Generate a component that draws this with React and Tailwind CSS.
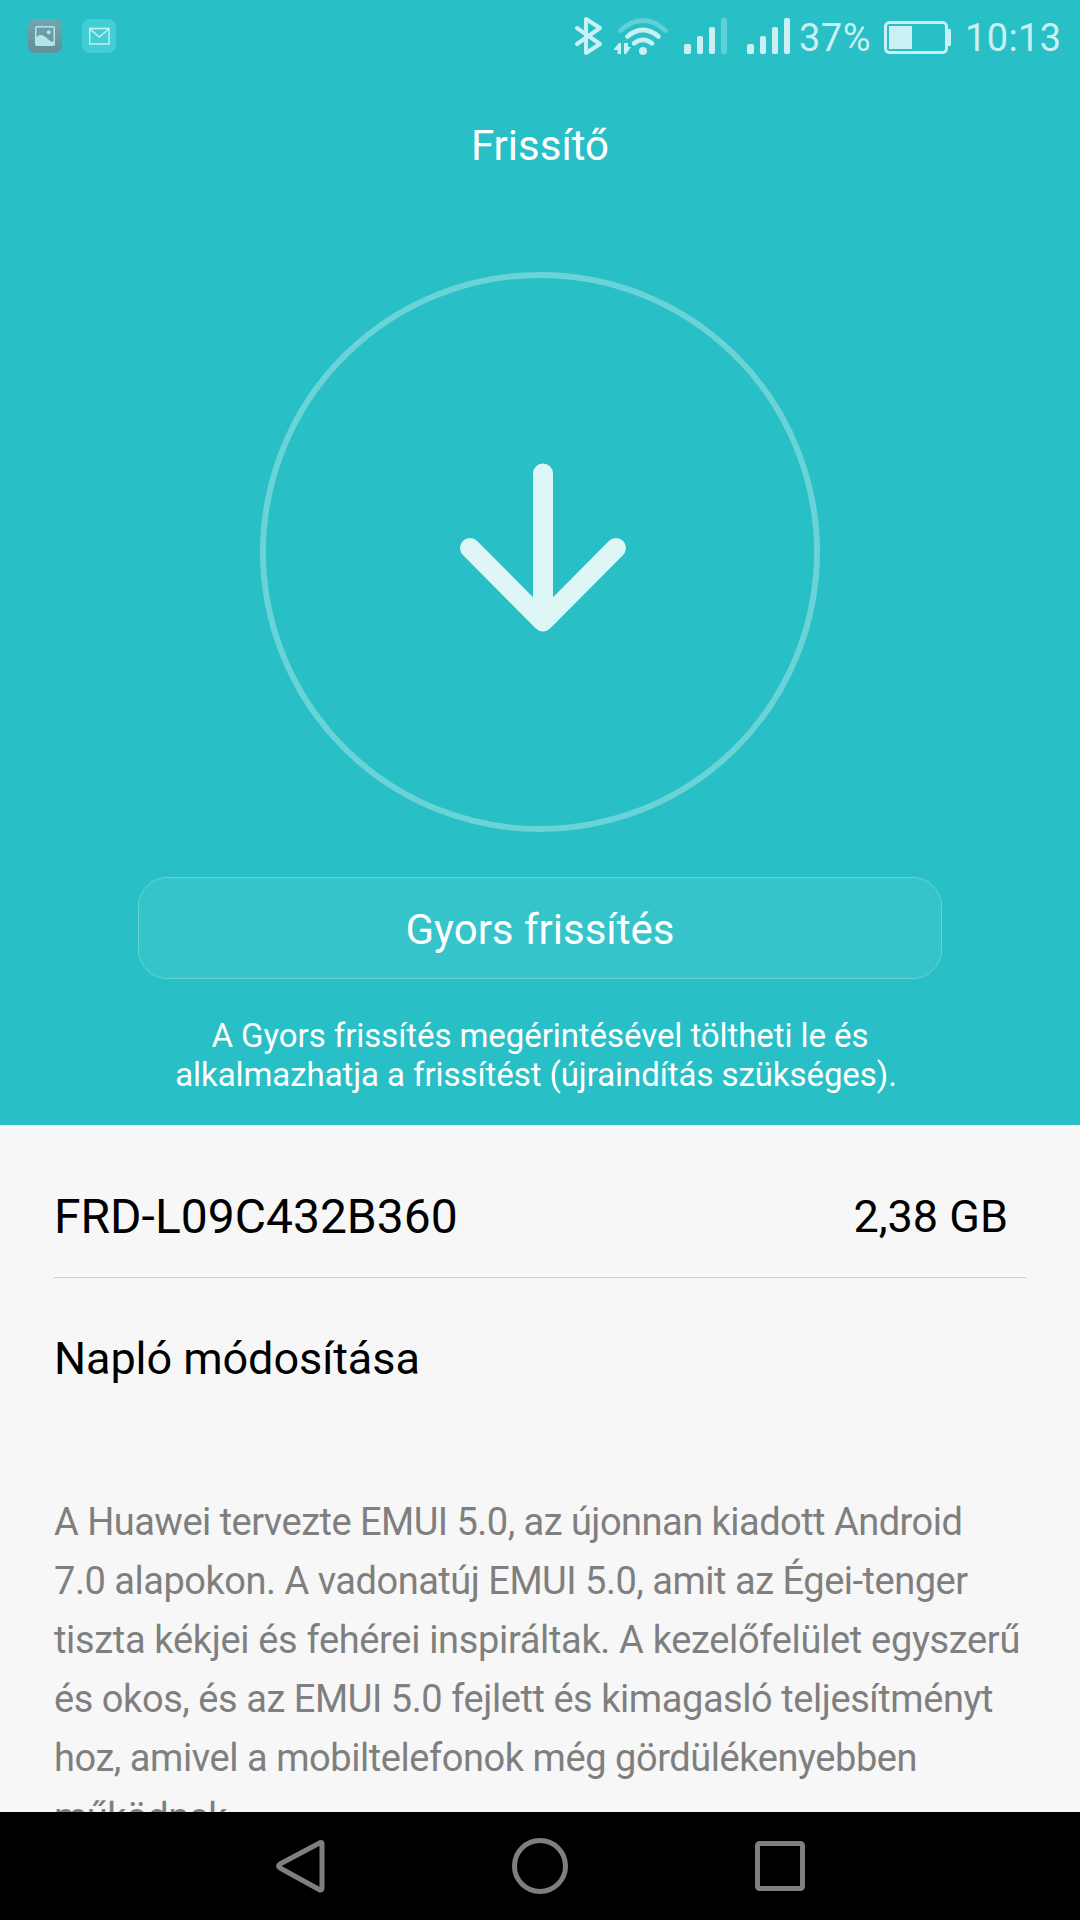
const paragraph = [
  ["A Huawei tervezte EMUI 5.0, az újonnan kiadott Android", "tracking-[-0.52px]"],
  ["7.0 alapokon. A vadonatúj EMUI 5.0, amit az Égei-tenger", "tracking-[-0.48px]"],
  ["tiszta kékjei és fehérei inspiráltak. A kezelőfelület egyszerű", "tracking-[-0.33px]"],
  ["és okos, és az EMUI 5.0 fejlett és kimagasló teljesítményt", "tracking-[-0.44px]"],
  ["hoz, amivel a mobiltelefonok még gördülékenyebben", "tracking-[-0.44px]"],
  ["működnek.", "tracking-[-0.5px]"],
];

function PictureIcon() {
  return (
    <svg width="34" height="34" viewBox="0 0 34 34">
      <defs>
        <linearGradient id="tile" x1="0" y1="0" x2="0" y2="1">
          <stop offset="0" stopColor="#72a6b0" />
          <stop offset="1" stopColor="#628f98" />
        </linearGradient>
      </defs>
      <rect width="34" height="34" rx="7" fill="url(#tile)" />
      <rect x="7.75" y="7.75" width="18.5" height="18.5" rx="1" fill="none" stroke="#b6e3e5" strokeWidth="1.5" />
      <circle cx="20.7" cy="13.3" r="2" fill="#b6e3e5" />
      <path d="M8 18 C12 15 14 15.500 17 17.500 L23 22.500 H26 V26 H8 Z" fill="#b6e3e5" />
    </svg>
  );
}

function MailIcon() {
  return (
    <svg width="34" height="34" viewBox="0 0 34 34">
      <rect width="34" height="34" rx="8" fill="#43ced6" />
      <path d="M7.700 9.500 H27 V25 H7.700 Z M8 10 L17.400 18 L26.700 10" fill="none" stroke="#c9f0f2" strokeWidth="1.400" />
    </svg>
  );
}

function BluetoothIcon() {
  return (
    <svg width="30" height="40" viewBox="574 16 30 40" fill="none" stroke="#c9f0f2" strokeWidth="4" strokeLinecap="round" strokeLinejoin="round">
      <path d="M577 28 L600 44 L586 53 V19 L600 28 L577 44" />
    </svg>
  );
}

function WifiIcon() {
  return (
    <svg width="56" height="40" viewBox="613 16 56 40" fill="none" stroke="#c9f0f2" strokeWidth="4.600" strokeLinecap="round">
      <path d="M620.500 30.500 Q643 10.500 665.500 30.500" stroke="#5fd0d6" />
      <path d="M627.500 36.500 Q643 23.500 658.500 36.500" />
      <path d="M634 43.300 Q643 36.500 652 43.300" />
      <circle cx="643" cy="51" r="4" fill="#c9f0f2" stroke="none" />
      <path d="M614 49 L619 43 H621 V54 H617.500 V50 H614 Z M624 43 H628 V47 H631 L626 54 H624 Z" fill="#c9f0f2" stroke="none" />
    </svg>
  );
}

function SignalIcon({ faded }) {
  return (
    <svg width="44" height="40" viewBox="0 16 44 40" fill="#c9f0f2">
      <rect x="0" y="44" width="7" height="10" rx="1.800" />
      <rect x="13" y="36" width="6" height="18" rx="1.800" />
      <rect x="25" y="27" width="6" height="27" rx="1.800" />
      <rect x="37" y="18" width="6" height="36" rx="1.800" fill={faded ? "#5fd0d6" : "#c9f0f2"} />
    </svg>
  );
}

function BatteryIcon() {
  return (
    <svg width="68" height="34" viewBox="0 0 68 34">
      <rect x="1.500" y="1.500" width="61" height="30" rx="4" fill="none" stroke="#c9f0f2" strokeWidth="3" />
      <rect x="5" y="5" width="23" height="23" fill="#c9f0f2" />
      <path d="M63 8 H66 Q67 8 67 10 V23 Q67 25 66 25 H63 Z" fill="#c9f0f2" />
    </svg>
  );
}

function StatusBar() {
  return (
    <div className="flex h-[72px] w-full pl-7 text-[38px] leading-[72px] text-[#c9f0f2]">
      <div className="flex gap-5 pt-[19px]">
        <PictureIcon />
        <MailIcon />
      </div>
      <div className="ml-[458px] flex pt-4">
        <BluetoothIcon />
        <div className="ml-[9px]"><WifiIcon /></div>
        <div className="ml-[15px]"><SignalIcon faded /></div>
        <div className="ml-[19px]"><SignalIcon /></div>
      </div>
      <span className="ml-[8px] w-[85px] pt-[2px] tracking-[0.5px]">37%</span>
      <div className="pt-[21px]"><BatteryIcon /></div>
      <span className="ml-[13px] pt-[2px] tracking-[0.4px]">10:13</span>
    </div>
  );
}

export default function App() {
  return (
    <div className="flex h-[1920px] w-[1080px] flex-col overflow-hidden bg-[#f7f7f7] font-['Roboto',sans-serif]">
      <section className="flex h-[1125px] shrink-0 flex-col items-center bg-[#29bfc7] text-white">
        <StatusBar />
        <h1 className="flex h-[146px] items-center text-[42px]">Frissítő</h1>
        <svg className="mt-[54px] shrink-0" width="560" height="560" viewBox="260 272 560 560" fill="none">
          <circle cx="540" cy="552" r="277" stroke="#69d3d8" strokeWidth="6" />
          <path d="M543 473.500 V621 M470 548 L543 621.500 L616 548" stroke="#dff6f7" strokeWidth="20" strokeLinecap="round" strokeLinejoin="round" />
        </svg>
        <button className="mt-[45px] h-[102px] w-[804px] shrink-0 rounded-[29px] border border-[#66d1d7] bg-[#36c4cb] pt-[2px] text-[42px]">
          Gyors frissítés
        </button>
        <p className="mt-[37px] text-center text-[33px] leading-[39px] tracking-[-0.07px]">
          A Gyors frissítés megérintésével töltheti le és
          <br />
          <span className="mr-[8px]">alkalmazhatja a frissítést (újraindítás szükséges).</span>
        </p>
      </section>
      <main className="min-h-0 flex-1 overflow-hidden px-[54px]">
        <div className="flex h-[153px] items-center justify-between border-b border-[#d0d0d0] pt-[32px] pr-[18px] text-[48px]">
          <span>FRD-L09C432B360</span>
          <span className="text-[45px]">2,38 GB</span>
        </div>
        <h2 className="flex h-[162px] items-center text-[45px] tracking-[-0.08px]">Napló módosítása</h2>
        <div className="mt-[53px] text-[38px] leading-[59px] whitespace-nowrap text-[#7f7f7f]">
          {paragraph.map(([line, tracking]) => (
            <p key={line} className={tracking}>{line}</p>
          ))}
        </div>
      </main>
      <nav className="flex h-[108px] shrink-0 items-center bg-black">
        <svg className="mx-auto" width="530" height="60" viewBox="275 1836 530 60" fill="none" stroke="#7f7f7f" strokeWidth="5" strokeLinejoin="round">
          <path d="M320.500 1842.500 Q322 1842 322 1844 V1888 Q322 1890.500 320 1890 L280 1868 Q277 1866 280 1864 Z" />
          <circle cx="540" cy="1866" r="25.500" />
          <rect x="757.500" y="1843.500" width="45" height="45" rx="2" />
        </svg>
      </nav>
    </div>
  );
}
